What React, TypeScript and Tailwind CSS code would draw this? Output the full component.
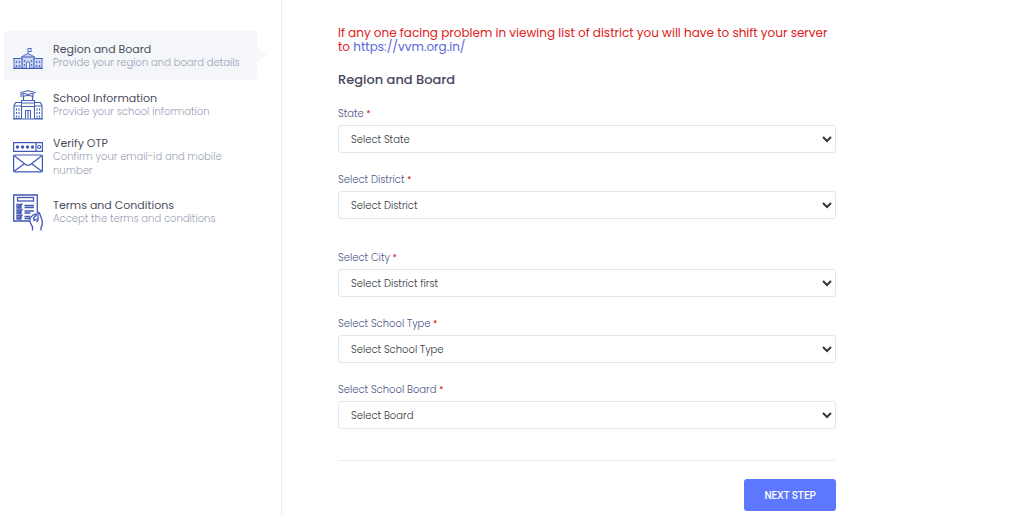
import type { ReactNode } from 'react';

function RegionIcon() {
  return (
    <svg viewBox="0 0 30 30" className="h-[30px] w-[30px]" fill="none" stroke="#5a74c8" strokeWidth="1" aria-hidden="true">
      <path d="M15 13V7.500h3.500l-1 1.500 1 1.500H15" />
      <path d="M9 15.500l6-3 6 3V27H9z" fill="#c9d6f5" />
      <path d="M1 17.500h8V27H1zM21 17.500h8V27h-8z" fill="#c9d6f5" />
      <path d="M0 17.500h9M21 17.500h9M8 16h14M0 27.500h30" stroke="#4560b8" strokeWidth="1.200" />
      <path d="M3.500 20v2M6.500 20v2M3.500 24v2M6.500 24v2M23.500 20v2M26.500 20v2M23.500 24v2M26.500 24v2M11.500 19v2M18.500 19v2M11.500 23v2M18.500 23v2" strokeWidth="1.300" />
      <path d="M13.500 27v-6h3v6" fill="#f5f7fb" />
    </svg>
  );
}

function SchoolIcon() {
  return (
    <svg viewBox="0 0 30 30" className="h-[30px] w-[30px]" fill="none" stroke="#4560b8" strokeWidth="1.100" aria-hidden="true">
      <path d="M7.500 2.500L15 .700l7.500 1.800L15 4.500zM10 3.500v3q5-2 10 0v-3M8 3v4" />
      <path d="M10.500 6.500v4M19.500 6.500v4M8.500 10.500h13v2.500h-13z" />
      <path d="M8.500 13v15.500M21.500 13v15.500M8.500 16.500h13" />
      <path d="M8 12.500H2.500L1 15.500v13h7.500M22 12.500h5.500l1.500 3v13h-7.500M1 16h7.500M21.500 16H29M0 29h30" />
      <path d="M3.500 18.500v2M6 18.500v2M3.500 22v2M6 22v2M3.500 25.500v2M6 25.500v2M24 18.500v2M26.500 18.500v2M24 22v2M26.500 22v2M24 25.500v2M26.500 25.500v2" />
      <path d="M12.500 28.500v-8h5v8M15 21v7.500" />
    </svg>
  );
}

function OtpIcon() {
  return (
    <svg viewBox="0 0 30 32" className="h-8 w-[30px]" fill="none" stroke="#4057b5" strokeWidth="1.200" aria-hidden="true">
      <path d="M.600 1.600h28.800v8.800H.600zM23 1.600v8.800" />
      <g fill="#4057b5" stroke="none">
        <circle cx="4.500" cy="6" r="1.700" />
        <circle cx="9.500" cy="6" r="1.700" />
        <circle cx="14.500" cy="6" r="1.700" />
        <circle cx="19.500" cy="6" r="1.700" />
      </g>
      <circle cx="26.200" cy="6" r="1.500" />
      <rect x=".600" y="14" width="28.800" height="16.800" rx="1" />
      <path d="M1 14.500l11.500 9q2.500 1.800 5 0l11.500-9M1 30.300l10.500-7.500M29 30.300l-10.500-7.500" />
    </svg>
  );
}

function TermsIcon() {
  return (
    <svg viewBox="0 0 30 37" className="h-[37px] w-[30px]" fill="none" stroke="#4057b5" strokeWidth="1.300" aria-hidden="true">
      <path d="M18 27H.700V1h23.600v18" />
      <rect x="4.500" y="3.500" width="16" height="3.500" />
      <path d="M4 10.500h4v3.500H4zM4 16h4v3.500H4zM4 21.500h4V25H4z" fill="#b9c6ee" />
      <path d="M5 12l1.300 1L9.500 9.500M5 17.500l1.300 1L9.500 15M5 23l1.300 1 3.200-3.500" />
      <path d="M11.500 11.500H21M11.500 13.500H21M11.500 17H21M11.500 19h6M11.500 22.500H17M11.500 24.500H17" />
      <path d="M19.500 36.500V33l-2.500-5v-4l2.500-2.500 3-1.500q1.500 0 .5 1.500l-2.500 2.500.5 2.500 3-1.500M23.500 28l1.500-2v-7q.500-1 1.500 0l2.500 7q1 5-1 7.500v3" fill="#fff" />
    </svg>
  );
}

interface StepProps {
  icon: ReactNode;
  title: string;
  detail: string;
}

function StepText({ icon, title, detail }: StepProps) {
  return (
    <>
      <span className="flex w-[30px] shrink-0 justify-center">{icon}</span>
      <span className="flex flex-col text-[10px] leading-[14px] font-light text-[#9a9fb6]">
        <span className="text-[11px] font-normal text-[#494d5e]">{title}</span>
        <span>{detail}</span>
      </span>
    </>
  );
}

interface FieldProps {
  id: string;
  label: string;
  placeholder: string;
}

function Field({ id, label, placeholder }: FieldProps) {
  return (
    <div className="flex flex-col gap-[3px]">
      <label htmlFor={id} className="text-[10px] leading-4 font-light text-[#4c5485]">
        {label} <span className="text-[8px] leading-none font-medium text-[#e02020]">*</span>
      </label>
      <select id={id} className="h-7 w-full rounded-[3px] border border-[#e2e5ec] bg-white pl-2 text-[10px] font-light text-[#33383e]">
        <option>{placeholder}</option>
      </select>
    </div>
  );
}

export default function App() {
  return (
    <div className="flex min-h-screen bg-white font-['Poppins','Inter',sans-serif]">
      <nav aria-label="Registration steps" className="w-[282px] shrink-0 border-r border-[#eeeef4] pt-[31px] pr-6 pl-1">
        <ol>
          <li aria-current="step" className="relative flex h-[49px] items-center gap-[10px] rounded bg-[#f4f6f9] px-[9px]">
            <StepText icon={<RegionIcon />} title="Region and Board" detail="Provide your region and board details" />
            <svg viewBox="0 0 10 16" className="absolute top-4 left-full h-4 w-[10px]" fill="#f7f8fb" aria-hidden="true">
              <path d="M0 0l10 8-10 8z" />
            </svg>
          </li>
          <li className="flex h-[49px] items-center gap-[10px] px-[9px]">
            <StepText icon={<SchoolIcon />} title="School Information" detail="Provide your school information" />
          </li>
          <li className="flex h-[55px] items-center gap-[10px] pr-6 pl-[9px]">
            <StepText icon={<OtpIcon />} title="Verify OTP" detail="Confirm your email-id and mobile number" />
          </li>
          <li className="flex h-[56px] items-center gap-[10px] px-[9px]">
            <StepText icon={<TermsIcon />} title="Terms and Conditions" detail="Accept the terms and conditions" />
          </li>
        </ol>
      </nav>

      <main className="min-w-0 flex-1 px-14 pt-[26px] pb-1">
        <form className="max-w-[498px]">
          <p className="text-[12px] leading-[14px] text-[#e02020]">
            If any one facing problem in viewing list of district you will have to shift your server to{' '}
            <a href="https://vvm.org.in/" className="text-[#5867dd]">https://vvm.org.in/</a>
          </p>
          <h1 className="mt-4 text-[13px] leading-5 font-medium text-[#48465b]">Region and Board</h1>
          <div className="mt-4 flex flex-col gap-[19px]">
            <Field id="state" label="State" placeholder="Select State" />
            <Field id="district" label="Select District" placeholder="Select District" />
          </div>
          <div className="mt-[31px] flex flex-col gap-[19px]">
            <Field id="city" label="Select City" placeholder="Select District first" />
            <Field id="school-type" label="Select School Type" placeholder="Select School Type" />
            <Field id="school-board" label="Select School Board" placeholder="Select Board" />
          </div>
          <div className="mt-[31px] flex justify-end border-t border-[#ebedf2] pt-[18px]">
            <button type="button" className="h-8 rounded-[3px] bg-[#5d78ff] px-5 font-['Roboto',sans-serif] text-[10px] font-medium text-white">
              NEXT STEP
            </button>
          </div>
        </form>
      </main>
    </div>
  );
}
